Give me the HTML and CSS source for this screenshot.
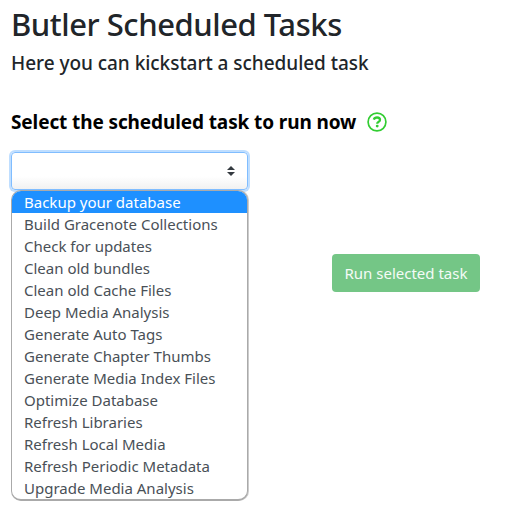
FILE: index.html
```html
<!DOCTYPE html>
<html lang="en">
<head>
<meta charset="utf-8">
<title>Butler Scheduled Tasks</title>
<link rel="stylesheet" href="styles.css">
</head>
<body>
<main class="page">
  <h1 class="title">Butler Scheduled Tasks</h1>
  <p class="subtitle">Here you can kickstart a scheduled task</p>
  <div class="label-row">
    <h2 class="label">Select the scheduled task to run now</h2>
    <svg class="help" viewBox="0 0 20 20" aria-label="Help">
      <circle cx="10" cy="10" r="8.9" fill="none" stroke="currentColor" stroke-width="1.7"/>
      <path d="M6.8 7.6C7.4 6 8.5 5.5 10 5.5c1.8 0 3 1 3 2.4 0 2-2.8 2-2.8 3.8" fill="none" stroke="currentColor" stroke-width="2.3"/>
      <circle cx="10.2" cy="14.1" r="1.45" fill="currentColor"/>
    </svg>
  </div>
  <div class="form">
    <div class="picker">
      <div class="select">
        <svg class="arrows" viewBox="0 0 8 10"><path d="M4 0 0 4h8zM4 10 0 6h8z" fill="currentColor"/></svg>
      </div>
      <ul class="options">
        <li class="option selected">Backup your database</li>
        <li class="option">Build Gracenote Collections</li>
        <li class="option">Check for updates</li>
        <li class="option">Clean old bundles</li>
        <li class="option">Clean old Cache Files</li>
        <li class="option">Deep Media Analysis</li>
        <li class="option">Generate Auto Tags</li>
        <li class="option">Generate Chapter Thumbs</li>
        <li class="option">Generate Media Index Files</li>
        <li class="option">Optimize Database</li>
        <li class="option">Refresh Libraries</li>
        <li class="option">Refresh Local Media</li>
        <li class="option">Refresh Periodic Metadata</li>
        <li class="option">Upgrade Media Analysis</li>
      </ul>
    </div>
    <button class="run">Run selected task</button>
  </div>
</main>
</body>
</html>
```
FILE: styles.css
```css
* { box-sizing: border-box; }
body {
  margin: 0;
  background: #fff;
  color: #212529;
  font-family: "Noto Sans", "Open Sans", sans-serif;
  overflow: hidden;
}
.page { padding: 4px 11px 0; white-space: nowrap; }
.title {
  margin: 0;
  height: 40px;
  font-size: 31px;
  line-height: 40px;
  font-weight: 500;
  letter-spacing: -0.45px;
}
.subtitle {
  margin: 7px 0 0;
  height: 24px;
  font-size: 19px;
  line-height: 24px;
  font-weight: 500;
  letter-spacing: -0.04px;
}
.label-row {
  display: flex;
  align-items: center;
  gap: 11px;
  height: 24px;
  margin-top: 35px;
}
.label {
  margin: 0;
  width: 345px;
  color: #000;
  font-size: 19px;
  line-height: 24px;
  font-weight: 700;
  letter-spacing: -0.11px;
}
.help { width: 20px; height: 20px; color: #32cd32; flex: none; }
.form {
  display: flex;
  align-items: flex-start;
  gap: 84px;
  margin-top: 18px;
}
.picker { width: 237px; flex: none; }
.select {
  display: flex;
  align-items: center;
  justify-content: flex-end;
  height: 38px;
  padding-right: 12px;
  border: 1px solid #80bdff;
  border-radius: 4px;
  background: linear-gradient(#fff 65%, #f1f1f1);
  box-shadow: 0 0 0 2px #bfdeff;
}
.arrows { width: 8px; height: 10px; color: #343a40; }
.options {
  position: relative;
  list-style: none;
  margin: 0;
  padding: 0;
  height: 311px;
  border: 1px solid #aaa;
  border-width: 1px 1px 2px;
  border-radius: 10px;
  background: #fff;
  box-shadow: 1px 0 0 #ccc;
  overflow: hidden;
}
.option {
  height: 22px;
  padding-left: 12px;
  color: #495057;
  font-size: 15px;
  line-height: 22px;
}
.selected { background: #1e90ff; color: #fff; }
.run {
  width: 148px;
  height: 38px;
  margin-top: 102px;
  padding: 0;
  border: 0;
  border-radius: 4px;
  background: #74c686;
  color: #f4fbf6;
  font: 15px/38px "Noto Sans", "Open Sans", sans-serif;
}
```
